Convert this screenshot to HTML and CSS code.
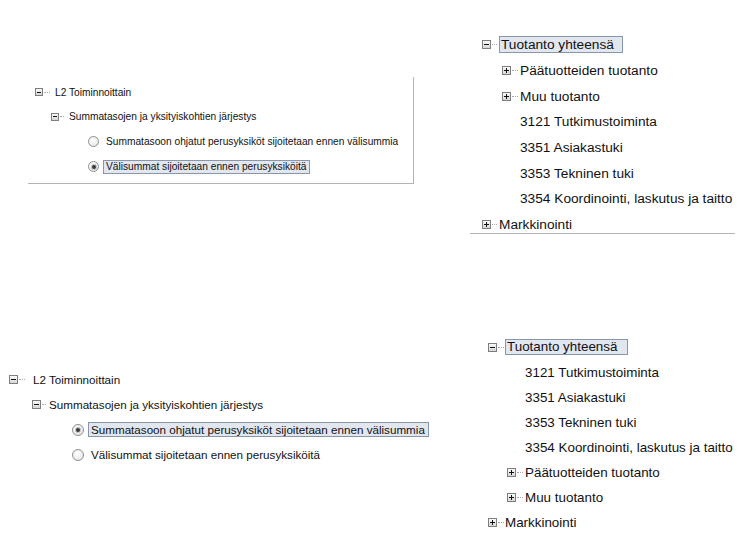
FILE: index.html
```html
<!DOCTYPE html>
<html lang="fi">
<head>
  <meta charset="UTF-8">
  <title>Raporttiasetukset</title>
  <link rel="stylesheet" href="styles.css">
</head>
<body>

<!-- järjestysasetus, valinta: välisummat ensin -->
<div class="panel order order-a">
  <div class="row lvl1"><span class="exp minus"></span><span class="dots"></span><span>L2 Toiminnoittain</span></div>
  <div class="row lvl2"><span class="exp minus"></span><span class="dots"></span><span>Summatasojen ja yksityiskohtien järjestys</span></div>
  <div class="row lvl3"><span class="radio"></span><span class="label">Summatasoon ohjatut perusyksiköt sijoitetaan ennen välisummia</span></div>
  <div class="row lvl3"><span class="radio on"></span><span class="label sel">Välisummat sijoitetaan ennen perusyksiköitä</span></div>
</div>

<!-- tulos: välisummat ensin -->
<div class="panel result result-a">
  <div class="row lvl1"><span class="exp minus"></span><span class="dots"></span><span class="label sel">Tuotanto yhteensä</span></div>
  <div class="row lvl2"><span class="exp plus"></span><span class="dots"></span><span>Päätuotteiden tuotanto</span></div>
  <div class="row lvl2"><span class="exp plus"></span><span class="dots"></span><span>Muu tuotanto</span></div>
  <div class="row leaf">3121 Tutkimustoiminta</div>
  <div class="row leaf">3351 Asiakastuki</div>
  <div class="row leaf">3353 Tekninen tuki</div>
  <div class="row leaf">3354 Koordinointi, laskutus ja taitto</div>
  <div class="row lvl1"><span class="exp plus"></span><span class="dots"></span><span>Markkinointi</span></div>
</div>

<!-- järjestysasetus, valinta: perusyksiköt ensin -->
<div class="panel order order-b">
  <div class="row lvl1"><span class="exp minus"></span><span class="dots"></span><span>L2 Toiminnoittain</span></div>
  <div class="row lvl2"><span class="exp minus"></span><span class="dots"></span><span>Summatasojen ja yksityiskohtien järjestys</span></div>
  <div class="row lvl3"><span class="radio on"></span><span class="label sel">Summatasoon ohjatut perusyksiköt sijoitetaan ennen välisummia</span></div>
  <div class="row lvl3"><span class="radio"></span><span class="label">Välisummat sijoitetaan ennen perusyksiköitä</span></div>
</div>

<!-- tulos: perusyksiköt ensin -->
<div class="panel result result-b">
  <div class="row lvl1"><span class="exp minus"></span><span class="dots"></span><span class="label sel">Tuotanto yhteensä</span></div>
  <div class="row leaf">3121 Tutkimustoiminta</div>
  <div class="row leaf">3351 Asiakastuki</div>
  <div class="row leaf">3353 Tekninen tuki</div>
  <div class="row leaf">3354 Koordinointi, laskutus ja taitto</div>
  <div class="row lvl2"><span class="exp plus"></span><span class="dots"></span><span>Päätuotteiden tuotanto</span></div>
  <div class="row lvl2"><span class="exp plus"></span><span class="dots"></span><span>Muu tuotanto</span></div>
  <div class="row lvl1"><span class="exp plus"></span><span class="dots"></span><span>Markkinointi</span></div>
</div>

</body>
</html>
```

FILE: styles.css
```css
body {
  font-family: 'Liberation Sans', Arial, sans-serif;
  background: #fff;
  color: #111;
  margin: 0;
  width: 754px;
  height: 540px;
  position: relative;
  overflow: hidden;
}

/* neljä kuvakaappausta vapaalla pohjalla */
.panel {
  position: absolute;
  box-sizing: border-box;
}

.row {
  display: flex;
  align-items: center;
  white-space: nowrap;
}

/* laajennusnappi */
.exp {
  position: relative;
  box-sizing: border-box;
  width: 8px;
  height: 8px;
  border: 1px solid #7e7e7e;
  background: linear-gradient(#fafafa, #d6d6d6);
  flex-shrink: 0;
}

.exp::before,
.exp::after {
  content: "";
  position: absolute;
  background: #111;
}

.exp::before {
  left: 1px;
  right: 1px;
  top: 2.5px;
  height: 1px;
}

.plus::after {
  top: 1px;
  bottom: 1px;
  left: 2.5px;
  width: 1px;
}

.dots {
  width: 5px;
  margin: 0 2px 0 1px;
  border-top: 1px dotted #a8a8a8;
}

.radio {
  position: relative;
  box-sizing: border-box;
  width: 11px;
  height: 11px;
  border: 1px solid #8e8f8f;
  border-radius: 50%;
  background: radial-gradient(circle at 40% 35%, #fff, #e2e2e2);
  flex-shrink: 0;
  margin-right: 4px;
}

.radio.on::after {
  content: "";
  position: absolute;
  left: 2.5px;
  top: 2.5px;
  width: 4px;
  height: 4px;
  border-radius: 50%;
  background: #3a3a3a;
  box-shadow: 0 0 0 1px #bfc4c8;
}

.label {
  box-sizing: border-box;
  padding: 0 3px 0 2px;
  border: 1px solid transparent;
}

.label.sel {
  background: #e1e6ef;
  border-color: #8796ab;
}

/* asetuspaneelit */
.order-a {
  left: 28px;
  top: 77px;
  width: 386px;
  height: 107px;
  padding-top: 3px;
  font-size: 10.2px;
  border-right: 1px solid #b3b3b3;
  border-bottom: 1px solid #b3b3b3;
}

.order-a .row { height: 25px; }
.order-a .row:first-child { height: 24px; }
.order-a .lvl1 { padding-left: 7px; }
.order-a .lvl2 { padding-left: 23px; }
.order-a .lvl3 { padding-left: 60px; }
.order-a .lvl1 .dots { width: 6px; margin-right: 5px; }
.order-a .lvl2 .dots { width: 4px; margin-right: 5px; }
.order-a .label { height: 14px; line-height: 12px; }

.order-b {
  left: 0;
  top: 367px;
  width: 440px;
  font-size: 11.65px;
}

.order-b .row { height: 25px; }
.order-b .lvl1 { padding-left: 9px; }
.order-b .lvl2 { padding-left: 32px; }
.order-b .lvl3 { padding-left: 72px; }
.order-b .lvl1 .dots { width: 6px; margin-right: 8px; }
.order-b .lvl2 .dots { width: 4px; margin-right: 3px; }
.order-b .exp { width: 9px; height: 9px; }
.order-b .exp::before { top: 3px; }
.order-b .plus::after { left: 3px; }
.order-b .radio { width: 12px; height: 12px; margin-right: 4px; }
.order-b .radio.on::after { left: 3px; top: 3px; }
.order-b .label { height: 15px; line-height: 13px; }

/* tulospuut */
.result-a {
  left: 470px;
  top: 32px;
  width: 265px;
  height: 202px;
  font-size: 13.7px;
  border-bottom: 1px solid #b3b3b3;
}

.result-a .row { height: 25.7px; }
.result-a .lvl1 { padding-left: 12px; }
.result-a .lvl2 { padding-left: 32px; }
.result-a .leaf { padding-left: 50px; }
.result-a .exp,
.result-b .exp { width: 9px; height: 9px; }
.result-a .exp::before,
.result-b .exp::before { top: 3px; }
.result-a .plus::after,
.result-b .plus::after { left: 3px; }
.result-a .dots { width: 5px; margin-right: 2px; }
.result-a .lvl2 .dots { width: 6px; margin-right: 2px; }
.result-a .label { height: 17px; line-height: 15px; padding: 0 8px 0 1px; }

.result-b {
  left: 480px;
  top: 334.5px;
  width: 274px;
  font-size: 13.4px;
}

.result-b .row { height: 25px; }
.result-b .lvl1 { padding-left: 8px; }
.result-b .lvl2 { padding-left: 27px; }
.result-b .leaf { padding-left: 45px; }
.result-b .dots { width: 6px; margin-right: 1px; }
.result-b .lvl2 .dots { width: 6px; margin-right: 2px; }
.result-b .label { height: 16px; line-height: 14px; padding: 0 10px 0 1px; }
```
